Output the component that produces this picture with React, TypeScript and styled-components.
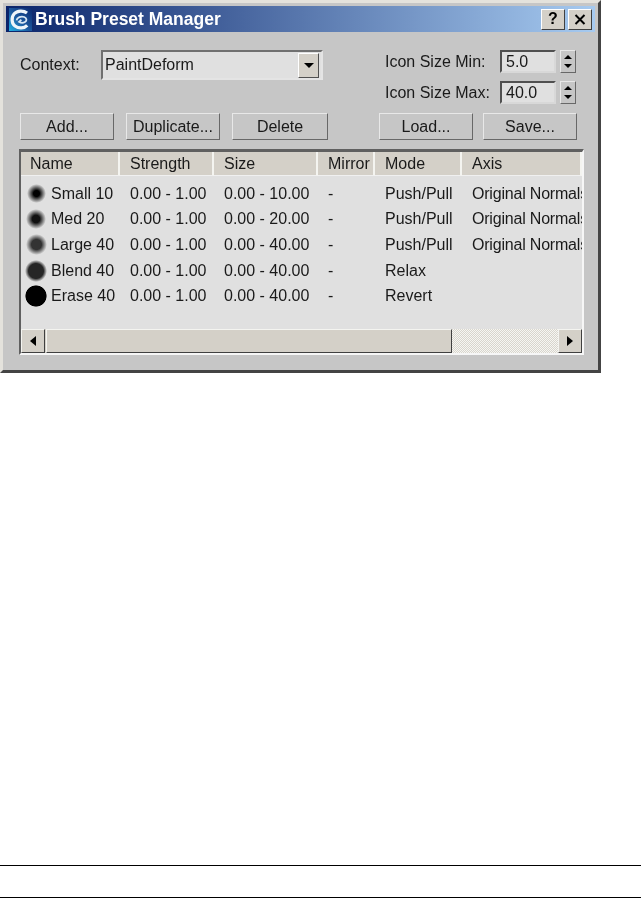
import React from 'react'
import styled, { createGlobalStyle } from 'styled-components'

const GlobalStyle = createGlobalStyle`
html, body {
  margin: 0;
  padding: 0;
  background: #fff;
}
body {
  font-family: 'Liberation Sans', Arial, sans-serif;
  font-size: 16px;
  color: #1a1a1a;
}
`

const Page = styled.div`
width: 641px;
height: 898px;
overflow: hidden;
display: flex;
flex-direction: column;
`

const Window = styled.div`
box-sizing: border-box;
width: 601px;
height: 373px;
background: #c6c6c6;
border-top: 3px solid #e4e2dc;
border-left: 3px solid #e4e2dc;
border-right: 3px solid #444;
border-bottom: 3px solid #444;
padding: 3px 3px 0 3px;
filter: blur(0.4px);
`

const TitleBar = styled.div`
height: 26px;
display: flex;
align-items: center;
padding: 0 3px;
background: linear-gradient(90deg, #0a246a 0%, #a6caf0 100%);
`

const LogoBox = styled.svg`
width: 23px;
height: 23px;
flex: none;
`

const TitleText = styled.div`
margin-left: 3px;
flex: 1;
color: #fff;
font-weight: 700;
font-size: 17.5px;
`

const CaptionButton = styled.div`
box-sizing: border-box;
width: 24px;
height: 21px;
margin-left: 3px;
display: flex;
align-items: center;
justify-content: center;
background: #d4d0c8;
border: 1px solid;
border-color: #fff #404040 #404040 #fff;
font-weight: 700;
font-size: 16px;
color: #000;
`

const TopSection = styled.div`
display: flex;
justify-content: space-between;
padding: 18px 19px 0 14px;
height: 72px;
box-sizing: border-box;
`

const ContextRow = styled.div`
display: flex;
align-items: flex-start;
`

const ContextLabel = styled.div`
width: 81px;
line-height: 29px;
`

const Combo = styled.div`
box-sizing: border-box;
width: 222px;
height: 30px;
display: flex;
align-items: center;
justify-content: space-between;
padding: 0 2px 0 2px;
background: #e0e0e0;
border: 2px solid;
border-color: #707070 #e4e4e4 #e4e4e4 #707070;
`

const ArrowButton = styled.div`
box-sizing: border-box;
width: 21px;
height: 25px;
display: flex;
align-items: center;
justify-content: center;
background: #d4d0c8;
border: 1px solid;
border-color: #fff #505050 #505050 #fff;
`

const SizeFields = styled.div`
display: flex;
flex-direction: column;
gap: 8px;
`

const SizeRow = styled.div`
display: flex;
align-items: center;
height: 23px;
`

const SizeLabel = styled.div`
width: 115px;
padding-top: 1px;
`

const SizeInput = styled.div`
box-sizing: border-box;
width: 56px;
height: 23px;
padding-left: 4px;
line-height: 19px;
background: #e0e0e0;
border: 2px solid;
border-color: #505050 #d8d8d8 #d8d8d8 #505050;
`

const Spinner = styled.div`
box-sizing: border-box;
width: 16px;
height: 23px;
margin-left: 4px;
display: flex;
flex-direction: column;
align-items: center;
justify-content: space-around;
padding: 2px 0;
background: #c6c6c6;
border: 1px solid;
border-color: #e8e8e8 #686868 #686868 #e8e8e8;
`

const ButtonRow = styled.div`
display: flex;
justify-content: space-between;
padding: 0 18px 0 14px;
margin-top: 9px;
`

const ButtonGroup = styled.div<{ $gap: number }>`
display: flex;
gap: ${(p) => p.$gap}px;
`

const PushButton = styled.div<{ $width: number }>`
box-sizing: border-box;
width: ${(p) => p.$width}px;
height: 27px;
display: flex;
align-items: center;
justify-content: center;
background: #c6c6c6;
border: 1px solid;
border-color: #e8e8e8 #686868 #686868 #e8e8e8;
`

const ListPanel = styled.div`
box-sizing: border-box;
width: 565px;
height: 206px;
margin: 9px 0 0 13px;
display: flex;
flex-direction: column;
background: #e0e0e0;
border-style: solid;
border-color: #606060 #f6f6f6 #f6f6f6 #606060;
border-width: 3px 2px 2px 2px;
overflow: hidden;
`

const columnTemplate = '99px 94px 104px 57px 87px 120px'

const HeaderRow = styled.div`
display: grid;
grid-template-columns: ${columnTemplate};
height: 24px;
flex: none;
`

const HeaderCell = styled.div`
box-sizing: border-box;
padding-left: 10px;
line-height: 23px;
background: #d4d0c8;
border-bottom: 1px solid #f0f0f0;
border-right: 2px solid #f4f4f0;
white-space: nowrap;
overflow: hidden;
&:first-child {
  padding-left: 9px;
}
`

const Rows = styled.div`
flex: 1;
padding-top: 5px;
`

const Row = styled.div`
display: grid;
grid-template-columns: ${columnTemplate};
height: 25.6px;
align-items: center;
white-space: nowrap;
`

const Cell = styled.div`
padding-left: 10px;
overflow: hidden;
`

const AxisCell = styled(Cell)`
letter-spacing: -0.2px;
`

const NameCell = styled(Cell)`
display: flex;
align-items: center;
padding-left: 0;
`

const BrushSlot = styled.div`
width: 30px;
display: flex;
justify-content: center;
flex: none;
`

const Brush = styled.div<{ $size: number; $core: number; $tone: string }>`
width: ${(p) => p.$size}px;
height: ${(p) => p.$size}px;
border-radius: 50%;
background: radial-gradient(circle closest-side, ${(p) => p.$tone} 0%, ${(p) => p.$tone} ${(p) => p.$core}%, #e0e0e0 100%);
`

const ScrollBar = styled.div`
flex: none;
height: 24px;
display: flex;
background: #d4d0c8;
`

const ScrollButton = styled.div`
box-sizing: border-box;
width: 24px;
flex: none;
display: flex;
align-items: center;
justify-content: center;
background: #d4d0c8;
border: 1px solid;
border-color: #f4f4f0 #404040 #404040 #f4f4f0;
`

const ScrollThumb = styled.div`
box-sizing: border-box;
width: 406px;
margin-left: 1px;
background: #d4d0c8;
border: 1px solid;
border-color: #f4f4f0 #404040 #404040 #f4f4f0;
`

const ScrollTrack = styled.div`
flex: 1;
background: repeating-conic-gradient(#f6f6f2 0 25%, #d8d5cd 0 50%) 0 0 / 2px 2px;
`

const PageRule = styled.div<{ $top: number }>`
height: 1px;
background: #000;
margin-top: ${(p) => p.$top}px;
flex: none;
`

const columnLabels = ['Name', 'Strength', 'Size', 'Mirror', 'Mode', 'Axis']

const presets = [
  { name: 'Small 10', size: 19, core: 32, tone: '#000', range: '0.00 - 10.00', mode: 'Push/Pull', axis: 'Original Normals' },
  { name: 'Med 20', size: 20, core: 38, tone: '#111', range: '0.00 - 20.00', mode: 'Push/Pull', axis: 'Original Normals' },
  { name: 'Large 40', size: 21, core: 48, tone: '#333', range: '0.00 - 40.00', mode: 'Push/Pull', axis: 'Original Normals' },
  { name: 'Blend 40', size: 22, core: 68, tone: '#262626', range: '0.00 - 40.00', mode: 'Relax', axis: '' },
  { name: 'Erase 40', size: 22, core: 92, tone: '#000', range: '0.00 - 40.00', mode: 'Revert', axis: '' },
]

function Triangle({ dir, size = 5 }: { dir: 'up' | 'down' | 'left' | 'right'; size?: number }) {
  const shapes = {
    up: '0,5 5,0 10,5',
    down: '0,0 10,0 5,5',
    left: '6,0 6,10 0,5',
    right: '0,0 0,10 6,5',
  }
  const horizontal = dir === 'left' || dir === 'right'
  const w = horizontal ? 6 : 10
  const h = horizontal ? 10 : 5
  return (
    <svg width={(w * size) / 5} height={(h * size) / 5} viewBox={`0 0 ${w} ${h}`}>
      <polygon points={shapes[dir]} fill="#000" />
    </svg>
  )
}

function Logo() {
  return (
    <LogoBox viewBox="0 0 23 23">
      <defs>
        <linearGradient id="logoBg" x1="1" y1="0" x2="0" y2="1">
          <stop offset="0" stopColor="#0c2a70" />
          <stop offset="0.55" stopColor="#1d5aa0" />
          <stop offset="1" stopColor="#22b0e4" />
        </linearGradient>
      </defs>
      <rect width="23" height="23" fill="url(#logoBg)" />
      <path d="M18 5C14.4 2.2 8.2 2.4 5.2 5.8 2 9.4 2.6 15.4 6 18c3.6 2.8 9.2 2.6 12.2-.6" fill="none" stroke="#eef4fa" strokeWidth="3.2" />
      <path d="M7.6 12.4c.2-3 4.6-4.6 7.6-3.4 2.6 1 3 3.6.8 5-1.8 1.2-4.2 1-6-.2l2.4-2" fill="none" stroke="#d8e6f4" strokeWidth="1.8" />
    </LogoBox>
  )
}

function SpinnerArrows() {
  return (
    <Spinner>
      <Triangle dir="up" size={4} />
      <Triangle dir="down" size={4} />
    </Spinner>
  )
}

export default function App() {
  return (
    <Page>
      <GlobalStyle />
      <Window>
        <TitleBar>
          <Logo />
          <TitleText>Brush Preset Manager</TitleText>
          <CaptionButton>?</CaptionButton>
          <CaptionButton>
            <svg width="12" height="11" viewBox="0 0 12 11">
              <path d="M1.5 1l9 9M10.5 1l-9 9" stroke="#000" strokeWidth="2" />
            </svg>
          </CaptionButton>
        </TitleBar>
        <TopSection>
          <ContextRow>
            <ContextLabel>Context:</ContextLabel>
            <Combo>
              PaintDeform
              <ArrowButton>
                <Triangle dir="down" />
              </ArrowButton>
            </Combo>
          </ContextRow>
          <SizeFields>
            <SizeRow>
              <SizeLabel>Icon Size Min:</SizeLabel>
              <SizeInput>5.0</SizeInput>
              <SpinnerArrows />
            </SizeRow>
            <SizeRow>
              <SizeLabel>Icon Size Max:</SizeLabel>
              <SizeInput>40.0</SizeInput>
              <SpinnerArrows />
            </SizeRow>
          </SizeFields>
        </TopSection>
        <ButtonRow>
          <ButtonGroup $gap={12}>
            <PushButton $width={94}>Add...</PushButton>
            <PushButton $width={94}>Duplicate...</PushButton>
            <PushButton $width={96}>Delete</PushButton>
          </ButtonGroup>
          <ButtonGroup $gap={10}>
            <PushButton $width={94}>Load...</PushButton>
            <PushButton $width={94}>Save...</PushButton>
          </ButtonGroup>
        </ButtonRow>
        <ListPanel>
          <HeaderRow>
            {columnLabels.map((label) => (
              <HeaderCell key={label}>{label}</HeaderCell>
            ))}
          </HeaderRow>
          <Rows>
            {presets.map((p) => (
              <Row key={p.name}>
                <NameCell>
                  <BrushSlot>
                    <Brush $size={p.size} $core={p.core} $tone={p.tone} />
                  </BrushSlot>
                  {p.name}
                </NameCell>
                <Cell>0.00 - 1.00</Cell>
                <Cell>{p.range}</Cell>
                <Cell>-</Cell>
                <Cell>{p.mode}</Cell>
                <AxisCell>{p.axis}</AxisCell>
              </Row>
            ))}
          </Rows>
          <ScrollBar>
            <ScrollButton>
              <Triangle dir="left" />
            </ScrollButton>
            <ScrollThumb />
            <ScrollTrack />
            <ScrollButton>
              <Triangle dir="right" />
            </ScrollButton>
          </ScrollBar>
        </ListPanel>
      </Window>
      <PageRule $top={492} />
      <PageRule $top={31} />
    </Page>
  )
}
